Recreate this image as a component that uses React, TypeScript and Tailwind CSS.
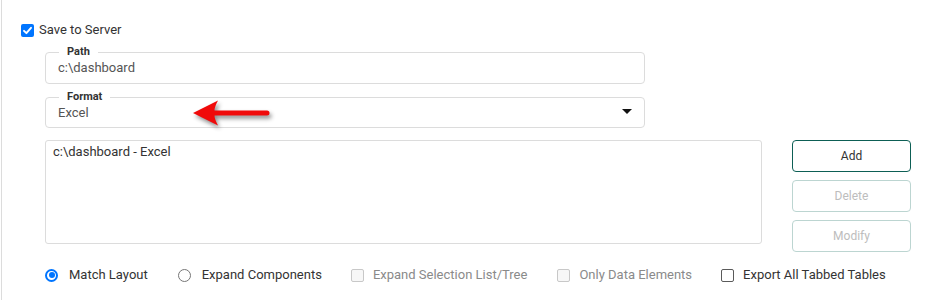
import React from 'react';

function CheckedBox() {
  return (
    <span className="flex h-[13px] w-[13px] items-center justify-center rounded-[2px] bg-[#0075ff]">
      <svg viewBox="0 0 13 13" className="h-[13px] w-[13px]">
        <path d="M3 6.8 L5.4 9.2 L10 3.8" fill="none" stroke="#fff" strokeWidth="1.9" strokeLinecap="round" strokeLinejoin="round" />
      </svg>
    </span>
  );
}

function Radio({ checked }: { checked?: boolean }) {
  if (checked) {
    return (
      <span className="flex h-[13px] w-[13px] items-center justify-center rounded-full border-2 border-[#0075ff] bg-white">
        <span className="h-[6px] w-[6px] rounded-full bg-[#0075ff]" />
      </span>
    );
  }
  return <span className="h-[13px] w-[13px] rounded-full border border-[#767676] bg-white" />;
}

function Box({ disabled }: { disabled?: boolean }) {
  return disabled ? (
    <span className="h-[13px] w-[13px] rounded-[2px] border border-[#c8c8c8] bg-[#f7f7f7]" />
  ) : (
    <span className="h-[13px] w-[13px] rounded-[2px] border border-[#5a5a5a] bg-white" />
  );
}

function Field({ label, children, className = '' }: { label: string; children: React.ReactNode; className?: string }) {
  return (
    <fieldset className={`relative w-[600px] rounded-[4px] border border-[#dcdcdc] ${className}`}>
      <legend className="ml-[13px] px-[8px] text-[11px] font-bold leading-[12px] text-[#333]">{label}</legend>
      {children}
    </fieldset>
  );
}

function RedArrow() {
  return (
    <svg
      viewBox="0 0 90 35"
      className="absolute left-[140px] top-[-6px] h-[35px] w-[90px] drop-shadow-[2px_3px_2px_rgba(0,0,0,0.45)]"
    >
      <path
        d="M7 16 L32 3.5 Q28.5 10 28.5 13.5 L81 13.5 A2.5 2.5 0 0 1 81 18.5 L28.5 18.5 Q28.5 22 32 28.5 Z"
        fill="#f00a0a"
      />
    </svg>
  );
}

export default function App() {
  const buttons = [
    { label: 'Add', enabled: true },
    { label: 'Delete', enabled: false },
    { label: 'Modify', enabled: false },
  ];

  return (
    <div className="h-[300px] w-[929px] bg-white pl-px font-['Roboto',sans-serif] text-[13px] text-[#333]">
      <div className="h-full border-l border-[#dcdcdc] pl-[19px] pt-[23px]">
        {/* Save to server */}
        <label className="flex h-[14px] items-center gap-[5px]">
          <CheckedBox />
          <span className="leading-[14px]">Save to Server</span>
        </label>

        <div className="ml-[24px]">
          <Field label="Path" className="mt-[9px]">
            <div className="h-[25px] pl-[12px] leading-[20px] text-[#555]">c:\dashboard</div>
          </Field>

          <Field label="Format" className="mt-[7px]">
            <div className="flex h-[24px] items-start justify-between pl-[12px] pr-[12px] leading-[19px] text-[#555]">
              <span>Excel</span>
              <svg viewBox="0 0 10 5" className="mt-[6px] h-[5px] w-[10px]">
                <path d="M0 0 L10 0 L5 5 Z" fill="#111" />
              </svg>
            </div>
            <RedArrow />
          </Field>

          <div className="mt-[12px] flex items-start">
            <div className="h-[104px] w-[717px] rounded-[3px] border border-[#dcdcdc] px-[7px] pt-[2px] leading-[18px]">
              c:\dashboard - Excel
            </div>
            <div className="ml-[30px] flex flex-col gap-[8px]">
              {buttons.map((b) => (
                <button
                  key={b.label}
                  className={
                    b.enabled
                      ? 'h-[32px] w-[119px] rounded-[4px] border border-[#0d5f55] bg-white text-[12px] text-[#333]'
                      : 'h-[32px] w-[119px] rounded-[4px] border border-[#bcd5d1] bg-white text-[12px] text-[#bdbdbd]'
                  }
                >
                  {b.label}
                </button>
              ))}
            </div>
          </div>

          {/* Options row */}
          <div className="mt-[13px] flex h-[20px] items-center">
            <label className="flex items-center gap-[11px]">
              <Radio checked />
              <span>Match Layout</span>
            </label>
            <label className="ml-[30px] flex items-center gap-[11px]">
              <Radio />
              <span>Expand Components</span>
            </label>
            <label className="ml-[29px] flex items-center gap-[9px]">
              <Box disabled />
              <span className="text-[#8a8a8a]">Expand Selection List/Tree</span>
            </label>
            <label className="ml-[30px] flex items-center gap-[9px]">
              <Box disabled />
              <span className="text-[#8a8a8a]">Only Data Elements</span>
            </label>
            <label className="ml-[29px] flex items-center gap-[9px]">
              <Box />
              <span>Export All Tabbed Tables</span>
            </label>
          </div>
        </div>
      </div>
    </div>
  );
}
